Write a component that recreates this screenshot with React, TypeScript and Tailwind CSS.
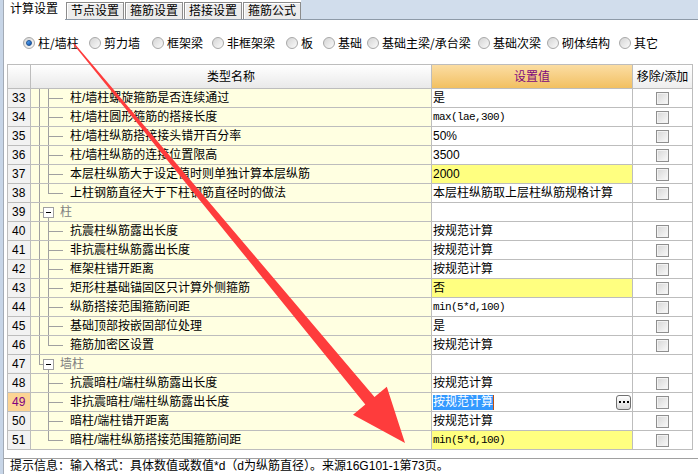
import React from 'react'

type Kind = 'leaf' | 'last' | 'group' | 'lastGroup'

type Row = {
  n: number
  name: string
  value?: string
  kind: Kind
  outer: boolean
  mono?: boolean
  yellow?: boolean
  selected?: boolean
}

const rows: Row[] = [
  { n: 33, name: '柱/墙柱螺旋箍筋是否连续通过', value: '是', kind: 'leaf', outer: true },
  { n: 34, name: '柱/墙柱圆形箍筋的搭接长度', value: 'max(lae,300)', kind: 'leaf', outer: true, mono: true },
  { n: 35, name: '柱/墙柱纵筋搭接接头错开百分率', value: '50%', kind: 'leaf', outer: true },
  { n: 36, name: '柱/墙柱纵筋的连接位置限高', value: '3500', kind: 'leaf', outer: true },
  { n: 37, name: '本层柱纵筋大于设定值时则单独计算本层纵筋', value: '2000', kind: 'leaf', outer: true, yellow: true },
  { n: 38, name: '上柱钢筋直径大于下柱钢筋直径时的做法', value: '本层柱纵筋取上层柱纵筋规格计算', kind: 'last', outer: true },
  { n: 39, name: '柱', kind: 'group', outer: true },
  { n: 40, name: '抗震柱纵筋露出长度', value: '按规范计算', kind: 'leaf', outer: true },
  { n: 41, name: '非抗震柱纵筋露出长度', value: '按规范计算', kind: 'leaf', outer: true },
  { n: 42, name: '框架柱错开距离', value: '按规范计算', kind: 'leaf', outer: true },
  { n: 43, name: '矩形柱基础锚固区只计算外侧箍筋', value: '否', kind: 'leaf', outer: true, yellow: true },
  { n: 44, name: '纵筋搭接范围箍筋间距', value: 'min(5*d,100)', kind: 'leaf', outer: true, mono: true },
  { n: 45, name: '基础顶部按嵌固部位处理', value: '是', kind: 'leaf', outer: true },
  { n: 46, name: '箍筋加密区设置', value: '按规范计算', kind: 'last', outer: true },
  { n: 47, name: '墙柱', kind: 'lastGroup', outer: false },
  { n: 48, name: '抗震暗柱/端柱纵筋露出长度', value: '按规范计算', kind: 'leaf', outer: false },
  { n: 49, name: '非抗震暗柱/端柱纵筋露出长度', value: '按规范计算', kind: 'leaf', outer: false, selected: true },
  { n: 50, name: '暗柱/端柱错开距离', value: '按规范计算', kind: 'leaf', outer: false },
  { n: 51, name: '暗柱/端柱纵筋搭接范围箍筋间距', value: 'min(5*d,100)', kind: 'last', outer: false, mono: true, yellow: true },
]

const radios = [
  { label: '柱/墙柱', w: 'w-[66px]', on: true },
  { label: '剪力墙', w: 'w-[63px]' },
  { label: '框架梁', w: 'w-[60px]' },
  { label: '非框架梁', w: 'w-[74px]' },
  { label: '板', w: 'w-[37px]' },
  { label: '基础', w: 'w-[44px]' },
  { label: '基础主梁/承台梁', w: 'w-[111px]' },
  { label: '基础次梁', w: 'w-[69px]' },
  { label: '砌体结构', w: 'w-[72px]' },
  { label: '其它', w: 'w-auto' },
]

const tabs = ['节点设置', '箍筋设置', '搭接设置', '箍筋公式']

const Tree = ({ kind, outer }: { kind: Kind; outer: boolean }) => {
  const isGroup = kind === 'group' || kind === 'lastGroup'
  const c = '#a0a0a0'
  return (
    <svg width={isGroup ? 29 : 39} height={18} shapeRendering="crispEdges" className="shrink-0">
      {isGroup ? (
        <>
          <line x1={8.5} y1={0} x2={8.5} y2={kind === 'lastGroup' ? 9.5 : 18} stroke={c} />
          <line x1={8.5} y1={9.5} x2={12} y2={9.5} stroke={c} />
          <rect x={12.5} y={4.5} width={10} height={10} fill="#fff" stroke={c} />
          <line x1={15} y1={9.5} x2={20} y2={9.5} stroke="#000" />
          <line x1={17.5} y1={15} x2={17.5} y2={18} stroke={c} />
        </>
      ) : (
        <>
          {outer && <line x1={8.5} y1={0} x2={8.5} y2={18} stroke={c} />}
          <line x1={17.5} y1={0} x2={17.5} y2={kind === 'last' ? 9.5 : 18} stroke={c} />
          <line x1={17.5} y1={9.5} x2={32} y2={9.5} stroke={c} />
        </>
      )}
    </svg>
  )
}

const Check = () => (
  <div className="w-[13px] h-[13px] border border-[#8f8f8f] bg-linear-to-br from-[#d6d6d6] to-[#fafafa] shadow-[inset_0_0_0_1px_#f2f2f2]" />
)

const Radio = ({ on }: { on?: boolean }) => (
  <div className="w-[12px] h-[12px] rounded-full border border-[#a8a8a8] bg-linear-to-br from-[#d4d4d4] to-[#fbfbfb] flex items-center justify-center shrink-0">
    {on && <div className="w-[6px] h-[6px] rounded-full bg-linear-to-br from-[#5fb0ff] to-[#0a4ea8] border border-[#1a4f8f]" />}
  </div>
)

const App: React.FC = () => {
  return (
    <div className="relative w-[698px] h-[474px] overflow-hidden bg-white flex text-[12px] text-black font-['Liberation_Sans','Noto_Sans_CJK_SC',sans-serif]">
      <div className="w-[3px] h-full bg-[#c7d5e7] border-r border-[#a3abb6] box-content" />
      <div className="flex-1 flex flex-col">
        {/* tab bar */}
        <div className="flex h-[20px]">
          <div className="w-[61px] h-[20px] bg-white pl-[6px] leading-[18px]">计算设置</div>
          <div className="flex border-b border-[#8e9aa8] bg-white">
            {tabs.map((t) => (
              <div
                key={t}
                className="ml-[1px] mt-[2px] w-[58px] h-[17px] bg-[#ececec] border border-b-0 border-[#8c8c8c] shadow-[inset_1px_1px_0_#ffffff] text-center leading-[16px]"
              >
                {t}
              </div>
            ))}
          </div>
          <div className="flex-1 bg-[#d1ddec] border-b border-[#8e9aa8]" />
        </div>

        {/* radios */}
        <div className="mt-[13px] h-[20px] flex items-center pl-[19px]">
          {radios.map((r) => (
            <div key={r.label} className={`${r.w} flex items-center gap-[3px] shrink-0`}>
              <Radio on={r.on} />
              <span className="font-['Noto_Sans_CJK_SC',sans-serif] leading-[14px]">{r.label}</span>
            </div>
          ))}
        </div>

        {/* table */}
        <div className="mt-[11px] ml-[3px] w-[686px] border-l border-t border-[#bdbdbd]">
          <div className="flex h-[24px]">
            <div className="w-[23px] border-r border-b border-[#bdbdbd] bg-linear-to-b from-white to-[#e9e9e9]" />
            <div className="w-[401px] border-r border-b border-[#bdbdbd] bg-linear-to-b from-white to-[#e9e9e9] flex items-center justify-center">
              类型名称
            </div>
            <div className="w-[201px] border-r border-b border-[#bdbdbd] bg-linear-to-b from-[#fbdda2] to-[#f2c060] flex items-center justify-center text-[#7d087d]">
              设置值
            </div>
            <div className="w-[60px] border-r border-b border-[#bdbdbd] bg-linear-to-b from-white to-[#eeeeee] flex items-center justify-center whitespace-nowrap">
              移除/添加
            </div>
          </div>
          {rows.map((r) => {
            const isGroup = r.kind === 'group' || r.kind === 'lastGroup'
            return (
              <div key={r.n} className="flex h-[19px]">
                <div
                  className={`w-[23px] border-r border-b border-[#bdbdbd] pl-[4px] leading-[18px] ${
                    r.selected ? 'bg-[#fcd494] text-[#800080]' : 'bg-[#f2f2f2]'
                  }`}
                >
                  {r.n}
                </div>
                <div className="w-[401px] border-r border-b border-[#bdbdbd] bg-[#ffffe1] flex items-center whitespace-nowrap">
                  <Tree kind={r.kind} outer={r.outer} />
                  <span className={`leading-[18px] ${isGroup ? 'text-[#808080]' : ''}`}>{r.name}</span>
                </div>
                <div
                  className={`w-[201px] border-r border-b border-[#bdbdbd] flex items-center pl-[1px] pr-[1px] whitespace-nowrap ${
                    r.yellow ? 'bg-[#ffff80]' : 'bg-white'
                  }`}
                >
                  {r.value &&
                    (r.selected ? (
                      <>
                        <span className="bg-[#3399ff] text-white leading-[15px]">{r.value}</span>
                        <span className="w-[1px] h-[15px] bg-[#c05010]" />
                        <div className="ml-auto w-[15px] h-[15px] rounded-[3px] border border-[#707070] bg-linear-to-b from-white to-[#d9d9d9] flex items-center justify-center gap-[2px]">
                          <span className="w-[2px] h-[2px] bg-black" />
                          <span className="w-[2px] h-[2px] bg-black" />
                          <span className="w-[2px] h-[2px] bg-black" />
                        </div>
                      </>
                    ) : r.mono ? (
                      <span className="font-['Liberation_Mono',monospace] text-[11px] tracking-[-0.6px] leading-[18px]">
                        {r.value}
                      </span>
                    ) : (
                      <span className="leading-[18px]">{r.value}</span>
                    ))}
                </div>
                <div className="w-[60px] border-r border-b border-[#bdbdbd] bg-white flex items-center justify-center">
                  {!isGroup && <Check />}
                </div>
              </div>
            )
          })}
        </div>

        {/* status */}
        <div className="mt-[8px] border-t border-[#a0a0a0] pl-[6px] h-[15px] leading-[15px] whitespace-nowrap">
          提示信息：输入格式：具体数值或数值*d（d为纵筋直径）。来源16G101-1第73页。
        </div>
      </div>

      {/* red annotation arrow */}
      <svg className="absolute inset-0 pointer-events-none" width={698} height={474}>
        <polygon
          points="74.5,43.6 374.5,396.9 386.8,386.7 405,443 353,414.7 365.3,404.5 73.5,44.4"
          fill="#fe3c3c"
        />
      </svg>
    </div>
  )
}

export default App
